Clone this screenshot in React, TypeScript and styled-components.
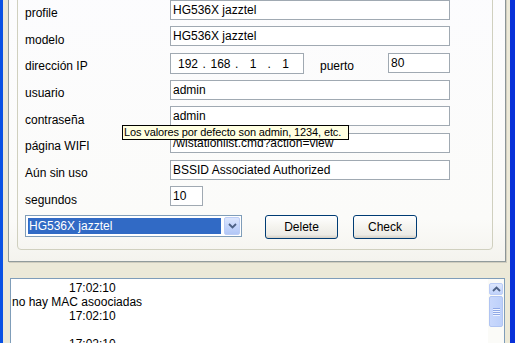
import React from 'react';
import styled, { createGlobalStyle } from 'styled-components';

const GlobalStyle = createGlobalStyle`
    html, body {
        margin: 0;
        padding: 0;
        background: #ece9d8;
        overflow: hidden;
    }
    body {
        font-family: "Liberation Sans", Arial, sans-serif;
        font-size: 12px;
        color: #000000;
    }
`;

const Window = styled.div`
    position: relative;
    width: 515px;
    height: 343px;
    box-sizing: border-box;
    display: flex;
    flex-direction: column;
    overflow: hidden;
    background: #ece9d8;
    border-left: 3px solid #0a52e4;
    border-right: 5px solid #0831d9;
`;

const TabPage = styled.div`
    margin: -20px 4px 0 5px;
    padding: 0 12px 11px 8px;
    border: 1px solid #919b9c;
    border-right-color: #8c9597;
    box-shadow: 1px 1px 0 #d0cdbf;
    background: linear-gradient(180deg, #fcfcfe 0%, #fbfbf9 85%, #f4f3ee 100%);
`;

const GroupBox = styled.div`
    padding: 17.5px 0 10px 7px;
    border: 1px solid #d0d0bf;
    border-radius: 4px;
`;

const Form = styled.div`
    display: grid;
    grid-template-columns: 145px 280px;
    grid-auto-rows: 20px;
    row-gap: 6.7px;
`;

const Label = styled.div`
    padding-top: 6.5px;
    line-height: 14px;
    white-space: nowrap;
`;

const Input = styled.div<{ $width?: number }>`
    box-sizing: border-box;
    width: ${p => (p.$width ? `${p.$width}px` : '100%')};
    height: 20px;
    padding: 2px 2px 0;
    line-height: 14px;
    background: #ffffff;
    border: 1px solid #a0a9b2;
    white-space: nowrap;
    overflow: hidden;
`;

const IpRow = styled.div`
    display: flex;
    align-items: flex-start;
`;

const IpBox = styled.div`
    box-sizing: border-box;
    display: flex;
    width: 134px;
    height: 21px;
    padding: 3px 0 0 4px;
    line-height: 14px;
    background: #ffffff;
    border: 1px solid #a0a9b2;
`;

const Octet = styled.span`
    width: 26px;
    text-align: center;
`;

const Dot = styled.span`
    width: 6.5px;
    text-align: center;
`;

const PortLabel = styled.div`
    flex: 1;
    padding: 6.5px 0 0 16px;
    line-height: 14px;
`;

const BottomRow = styled.div`
    display: flex;
    align-items: flex-start;
    margin-top: 8.6px;
`;

const Combo = styled.div`
    box-sizing: border-box;
    display: flex;
    width: 217px;
    height: 22px;
    padding: 1px;
    background: #ffffff;
    border: 1px solid #7f9db9;
`;

const Selected = styled.div`
    flex: 1;
    margin: 1px 3px 1px 1px;
    padding-left: 1px;
    line-height: 16px;
    color: #ffffff;
    background: #316ac5;
`;

const DropButton = styled.div`
    width: 16px;
    display: flex;
    align-items: center;
    justify-content: center;
    border-radius: 2px;
    border: 1px solid #bccdf6;
    box-sizing: border-box;
    background: linear-gradient(180deg, #dce6fd 0%, #c1d3fb 60%, #b2c7f6 100%);
`;

const Button = styled.div<{ $width: number; $left: number }>`
    box-sizing: border-box;
    width: ${p => p.$width}px;
    height: 24px;
    margin-left: ${p => p.$left}px;
    display: flex;
    align-items: center;
    justify-content: center;
    border: 1px solid #003c74;
    border-radius: 3px;
    background: linear-gradient(180deg, #ffffff 0%, #f4f3ee 50%, #ecebe6 85%, #d6d0c5 100%);
`;

const Log = styled.div`
    flex: 1;
    display: flex;
    margin: 16px 5px 0 7px;
    background: #ffffff;
    border: 1px solid #7f9db9;
    border-bottom: none;
`;

const LogText = styled.div`
    flex: 1;
    padding: 2px 0 0 1px;
    line-height: 14px;
`;

const LogLine = styled.div<{ $indent?: number }>`
    height: 14px;
    padding-left: ${p => p.$indent || 0}px;
    white-space: nowrap;
`;

const Scrollbar = styled.div`
    width: 15px;
    padding: 4px 0 0 1px;
    background: #fbfbf8;
`;

const ScrollButton = styled.div`
    box-sizing: border-box;
    width: 14px;
    height: 12px;
    display: flex;
    align-items: center;
    justify-content: center;
    border: 1px solid #bccdf6;
    border-radius: 2px;
    background: linear-gradient(180deg, #dce6fd 0%, #c1d3fb 100%);
`;

const Thumb = styled.div`
    box-sizing: border-box;
    width: 14px;
    height: 31px;
    margin-top: 1px;
    display: flex;
    flex-direction: column;
    align-items: center;
    justify-content: center;
    gap: 1px;
    border: 1px solid #b0c4f2;
    border-radius: 2px;
    background: linear-gradient(90deg, #c9d8fc 0%, #bdd0fa 100%);
`;

const Grip = styled.div`
    width: 7px;
    height: 1px;
    background: #8fa8e6;
    box-shadow: 0 1px 0 #eef3ff;
`;

const Tooltip = styled.div`
    position: absolute;
    top: 125px;
    left: 119px;
    width: 227px;
    height: 15px;
    box-sizing: border-box;
    padding: 0 1px;
    font-size: 11px;
    letter-spacing: -0.12px;
    line-height: 13px;
    white-space: nowrap;
    overflow: hidden;
    background: #ffffe1;
    border: 1px solid #000000;
`;

const Chevron = ({ up }: { up?: boolean }) => (
    <svg width="9" height="6" viewBox="0 0 9 6">
        <path
            d={up ? 'M1 5 L4.5 1.5 L8 5' : 'M1 1 L4.5 4.5 L8 1'}
            fill="none"
            stroke="#4d6185"
            strokeWidth="1.8"
        />
    </svg>
);

const fields = [
    { label: 'profile', value: 'HG536X jazztel' },
    { label: 'modelo', value: 'HG536X jazztel' },
    { label: 'dirección IP', ip: ['192', '168', '1', '1'], port: '80' },
    { label: 'usuario', value: 'admin' },
    { label: 'contraseña', value: 'admin' },
    { label: 'página WIFI', value: '/wistationlist.cmd?action=view' },
    { label: 'Aún sin uso', value: 'BSSID Associated Authorized' },
    { label: 'segundos', value: '10', width: 33 },
];

const log = [
    { text: '17:02:10', indent: 57 },
    { text: 'no hay MAC asoociadas' },
    { text: '17:02:10', indent: 57 },
    { text: '' },
    { text: '17:02:10', indent: 57 },
];

const App = () => (
    <Window>
        <GlobalStyle />
        <TabPage>
            <GroupBox>
                <Form>
                    {fields.map(f => (
                        <React.Fragment key={f.label}>
                            <Label>{f.label}</Label>
                            {f.ip ? (
                                <IpRow>
                                    <IpBox>
                                        {f.ip.map((o, i) => (
                                            <React.Fragment key={i}>
                                                {i > 0 && <Dot>.</Dot>}
                                                <Octet>{o}</Octet>
                                            </React.Fragment>
                                        ))}
                                    </IpBox>
                                    <PortLabel>puerto</PortLabel>
                                    <Input $width={62}>{f.port}</Input>
                                </IpRow>
                            ) : (
                                <Input $width={f.width}>{f.value}</Input>
                            )}
                        </React.Fragment>
                    ))}
                </Form>
                <BottomRow>
                    <Combo>
                        <Selected>HG536X jazztel</Selected>
                        <DropButton><Chevron /></DropButton>
                    </Combo>
                    <Button $width={73} $left={23}>Delete</Button>
                    <Button $width={64} $left={15}>Check</Button>
                </BottomRow>
            </GroupBox>
        </TabPage>
        <Log>
            <LogText>
                {log.map((l, i) => (
                    <LogLine key={i} $indent={l.indent}>{l.text}</LogLine>
                ))}
            </LogText>
            <Scrollbar>
                <ScrollButton><Chevron up /></ScrollButton>
                <Thumb><Grip /><Grip /><Grip /><Grip /></Thumb>
            </Scrollbar>
        </Log>
        <Tooltip>Los valores por defecto son admin, 1234, etc.</Tooltip>
    </Window>
);

export default App;
